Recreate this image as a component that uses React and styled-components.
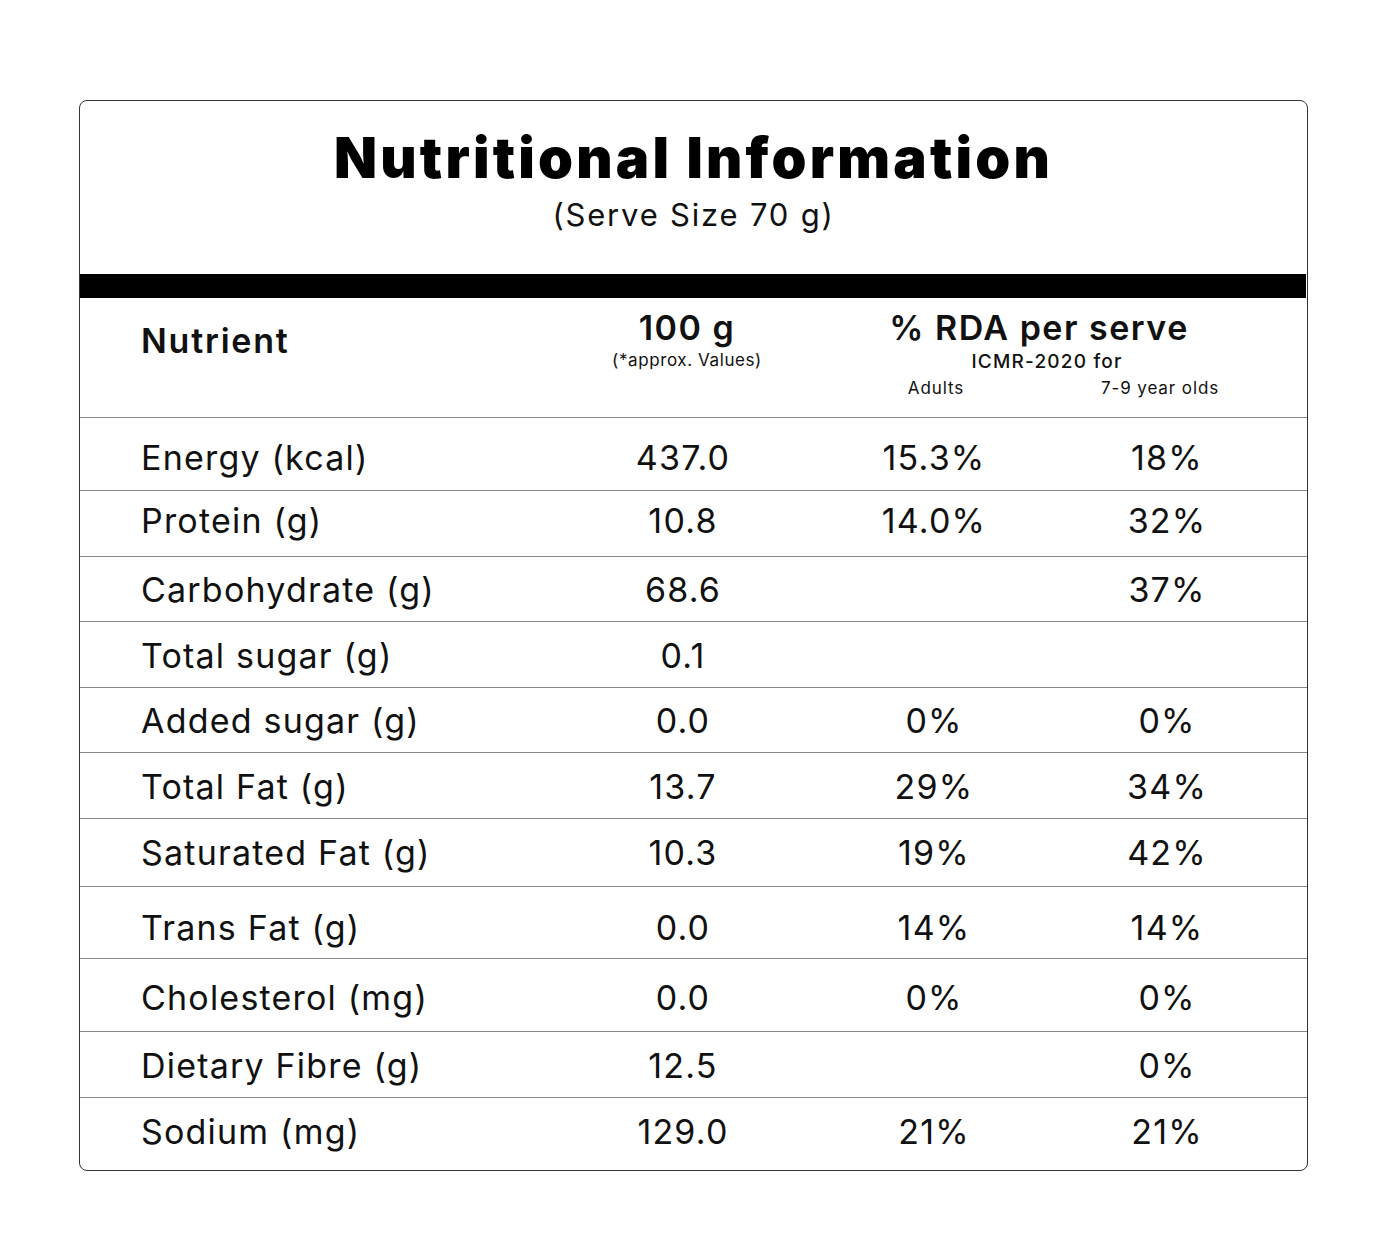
import React from "react";
import styled, { createGlobalStyle } from "styled-components";

// h = row height, dy = small nudge of the text inside its row
const rows = [
  { name: "Energy (kcal)", value: "437.0", adults: "15.3%", kids: "18%", h: 73, dy: 3 },
  { name: "Protein (g)", value: "10.8", adults: "14.0%", kids: "32%", h: 66, dy: -3 },
  { name: "Carbohydrate (g)", value: "68.6", adults: "", kids: "37%", h: 65, dy: 0 },
  { name: "Total sugar (g)", value: "0.1", adults: "", kids: "", h: 66, dy: 1 },
  { name: "Added sugar (g)", value: "0.0", adults: "0%", kids: "0%", h: 65, dy: 0 },
  { name: "Total Fat (g)", value: "13.7", adults: "29%", kids: "34%", h: 66, dy: 1 },
  { name: "Saturated Fat (g)", value: "10.3", adults: "19%", kids: "42%", h: 68, dy: 0 },
  { name: "Trans Fat (g)", value: "0.0", adults: "14%", kids: "14%", h: 72, dy: 5 },
  { name: "Cholesterol (mg)", value: "0.0", adults: "0%", kids: "0%", h: 73, dy: 2 },
  { name: "Dietary Fibre (g)", value: "12.5", adults: "", kids: "0%", h: 66, dy: 1 },
  { name: "Sodium (mg)", value: "129.0", adults: "21%", kids: "21%", h: 71, dy: -2 },
];

export default function App() {
  return (
    <>
      <GlobalStyle />
      <Page>
        <Card>
          <TitleBlock>
            <Title>Nutritional Information</Title>
            <Subtitle>(Serve Size 70 g)</Subtitle>
          </TitleBlock>
          <Bar />
          <HeadRow>
            <HeadName>Nutrient</HeadName>
            <HeadCol>
              <HeadMain>100 g</HeadMain>
              <HeadNote>(*approx. Values)</HeadNote>
            </HeadCol>
            <RdaHead>
              <HeadMain>% RDA per serve</HeadMain>
              <RdaSub>ICMR-2020 for</RdaSub>
              <RdaGroups>
                <GroupLabel>Adults</GroupLabel>
                <GroupLabel>7-9 year olds</GroupLabel>
              </RdaGroups>
            </RdaHead>
          </HeadRow>
          {rows.map((r, i) => (
            <Row key={r.name} $h={r.h} $dy={r.dy} $last={i === rows.length - 1}>
              <Name>{r.name}</Name>
              <Cell>{r.value}</Cell>
              <Cell>{r.adults}</Cell>
              <Cell>{r.kids}</Cell>
            </Row>
          ))}
        </Card>
      </Page>
    </>
  );
}

const GlobalStyle = createGlobalStyle`
  body {
    margin: 0;
    background: #fff;
    font-family: Inter, Lato, "Noto Sans", sans-serif;
    color: #111;
  }
`;

const Page = styled.div`
  width: 1376px;
  height: 1235px;
  padding: 100px 0 0 79px;
  box-sizing: border-box;
`;

const Card = styled.div`
  width: 1229px;
  height: 1071px;
  box-sizing: border-box;
  border: 1.5px solid #333;
  border-radius: 8px;
  overflow: hidden;
`;

const TitleBlock = styled.div`
  height: 173px;
  display: flex;
  flex-direction: column;
  align-items: center;
  padding-top: 26px;
  box-sizing: border-box;
`;

const Title = styled.h1`
  margin: 0;
  font-size: 56px;
  font-weight: 900;
  line-height: 62px;
  color: #000;
  letter-spacing: 3.2px;
`;

const Subtitle = styled.div`
  font-size: 31px;
  font-weight: 400;
  line-height: 36px;
  margin-top: 8px;
  letter-spacing: 1.8px;
`;

const Bar = styled.div`
  height: 24px;
  background: #000;
  margin-right: 1px;
`;

const grid = `
  display: grid;
  grid-template-columns: 480px 246px 256px 210px;
`;

const HeadRow = styled.div`
  ${grid}
  height: 120px;
  box-sizing: border-box;
  border-bottom: 1.5px solid #888;
`;

const HeadName = styled.div`
  padding: 22px 0 0 61px;
  font-size: 34px;
  font-weight: 600;
  letter-spacing: 1.8px;
`;

const HeadCol = styled.div`
  display: flex;
  flex-direction: column;
  align-items: center;
  padding: 10px 0 0 8px;
`;

const HeadMain = styled.div`
  font-size: 34px;
  font-weight: 600;
  line-height: 40px;
  letter-spacing: 1.5px;
`;

const HeadNote = styled.div`
  font-size: 17px;
  line-height: 20px;
  margin-top: 2px;
  letter-spacing: 0.6px;
`;

const RdaHead = styled.div`
  grid-column: 3 / span 2;
  display: flex;
  flex-direction: column;
  align-items: center;
  padding-top: 10px;
`;

const RdaSub = styled.div`
  font-size: 19px;
  font-weight: 500;
  line-height: 22px;
  margin: 3px 0 0 16px;
  letter-spacing: 1.2px;
`;

const RdaGroups = styled.div`
  display: grid;
  grid-template-columns: 260px 188px;
  width: 100%;
  margin-top: 5px;
`;

const GroupLabel = styled.div`
  text-align: center;
  font-size: 17px;
  line-height: 20px;
  letter-spacing: 0.9px;
`;

const Row = styled.div`
  ${grid}
  height: ${(p) => p.$h}px;
  box-sizing: border-box;
  align-items: center;
  padding-top: ${(p) => Math.max(p.$dy, 0) * 2}px;
  padding-bottom: ${(p) => Math.max(-p.$dy, 0) * 2}px;
  border-bottom: ${(p) => (p.$last ? "none" : "1.5px solid #888")};
  font-size: 34px;
  font-weight: 400;
  letter-spacing: 1.2px;
`;

const Name = styled.div`
  padding-left: 61px;
`;

const Cell = styled.div`
  text-align: center;
`;
